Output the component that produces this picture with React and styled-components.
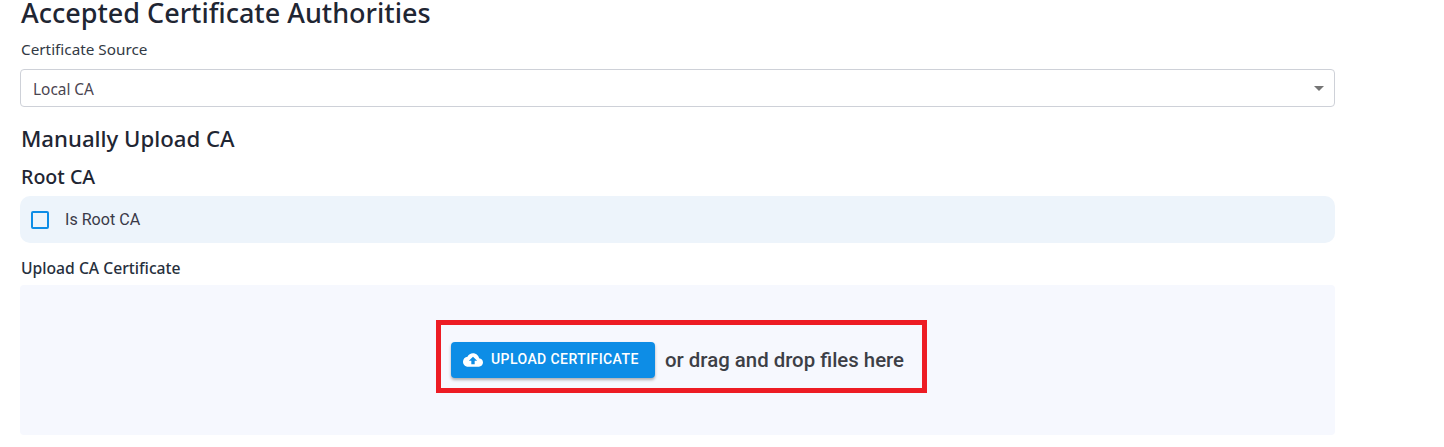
import React from 'react';
import styled, { createGlobalStyle } from 'styled-components';

const Global = createGlobalStyle`
  html, body { margin: 0; padding: 0; background: #fff; }
  body { font-family: "Noto Sans", sans-serif; overflow: hidden; }
`;
const Page = styled.main`
  width: 1315px;
  height: 447px;
  margin-left: 20px;
  display: flex;
  flex-direction: column;
`;
const Title = styled.h1`
  margin: 0;
  padding-left: 1px;
  font: 500 27px/26px "Noto Sans", sans-serif;
  color: #1f2633;
`;
const FieldLabel = styled.label`
  margin-top: 13px;
  padding-left: 1px;
  font: 400 15.3px/20px "Noto Sans", sans-serif;
  color: #333a45;
`;
const Select = styled.div`
  margin-top: 10px;
  height: 38px;
  box-sizing: border-box;
  border: 1px solid #ced1d8;
  border-radius: 4px;
  display: flex;
  align-items: center;
  justify-content: space-between;
  padding: 0 10px 0 12px;
  font: 400 15.4px/20px "Noto Sans", sans-serif;
  color: #4a4550;
`;
const SelectValue = styled.span`
  padding-top: 3px;
`;
const Caret = styled.span`
  width: 0;
  height: 0;
  border-left: 5px solid transparent;
  border-right: 5px solid transparent;
  border-top: 5px solid #757575;
`;
const SectionTitle = styled.h2`
  margin: 18px 0 0;
  padding-left: 1px;
  font: 500 22.2px/28px "Noto Sans", sans-serif;
  color: #1f2633;
`;
const SubTitle = styled.h3`
  margin: 10px 0 0;
  padding-left: 1px;
  font: 500 19.6px/28px "Noto Sans", sans-serif;
  color: #1f2633;
`;
const CheckRow = styled.label`
  margin-top: 5px;
  height: 47px;
  border-radius: 10px;
  background: #edf4fb;
  display: flex;
  align-items: center;
  padding-left: 11px;
  gap: 16px;
  font: 400 16.1px/20px Roboto, sans-serif;
  color: #3a3a48;
`;
const Box = styled.span`
  width: 18px;
  height: 18px;
  box-sizing: border-box;
  border: 2px solid #0d8de6;
  border-radius: 2px;
`;
const UploadLabel = styled.div`
  margin-top: 15px;
  padding-left: 1px;
  font: 500 15.7px/20px "Noto Sans", sans-serif;
  color: #27303d;
`;
const Dropzone = styled.section`
  position: relative;
  margin-top: 7px;
  height: 150px;
  background: #f6f8fe;
  border-radius: 4px;
  display: flex;
  align-items: flex-start;
  justify-content: center;
  padding-top: 57px;
  box-sizing: border-box;
  gap: 10px;
`;
const UploadButton = styled.button`
  flex: none;
  width: 204px;
  height: 36px;
  border: 0;
  border-radius: 4px;
  background: #0d8de6;
  color: #fff;
  display: flex;
  align-items: center;
  justify-content: flex-start;
  gap: 8px;
  padding: 0 0 2px 12px;
  font: 500 14px/16px Roboto, sans-serif;
  letter-spacing: 0.42px;
  white-space: nowrap;
  box-shadow: 0 2px 3px rgba(0, 0, 0, 0.3);
`;
const Cloud = styled.svg`
  flex: none;
  margin-top: 2px;
`;
const DropText = styled.span`
  font: 500 20.4px/36px Roboto, sans-serif;
  color: #3d3f46;
  white-space: nowrap;
`;
const Highlight = styled.div`
  position: absolute;
  left: 416px;
  top: 35px;
  width: 491px;
  height: 73px;
  box-sizing: border-box;
  border: 5px solid #ed1c24;
  pointer-events: none;
`;

const CloudIcon = () => (
  <Cloud width="20" height="20" viewBox="0 0 24 24" fill="#fff" aria-hidden="true">
    <path d="M19.35 10.04C18.67 6.59 15.64 4 12 4 9.11 4 6.6 5.64 5.35 8.04 2.34 8.36 0 10.91 0 14c0 3.31 2.69 6 6 6h13c2.76 0 5-2.24 5-5 0-2.64-2.05-4.78-4.65-4.96zM14 13v4h-4v-4H7l5-5 5 5h-3z" />
  </Cloud>
);

export default function App() {
  return (
    <Page>
      <Global />
      <Title>Accepted Certificate Authorities</Title>
      <FieldLabel>Certificate Source</FieldLabel>
      <Select>
        <SelectValue>Local CA</SelectValue>
        <Caret />
      </Select>
      <SectionTitle>Manually Upload CA</SectionTitle>
      <SubTitle>Root CA</SubTitle>
      <CheckRow>
        <Box />
        Is Root CA
      </CheckRow>
      <UploadLabel>Upload CA Certificate</UploadLabel>
      <Dropzone>
        <UploadButton>
          <CloudIcon />
          UPLOAD CERTIFICATE
        </UploadButton>
        <DropText>or drag and drop files here</DropText>
        <Highlight />
      </Dropzone>
    </Page>
  );
}
